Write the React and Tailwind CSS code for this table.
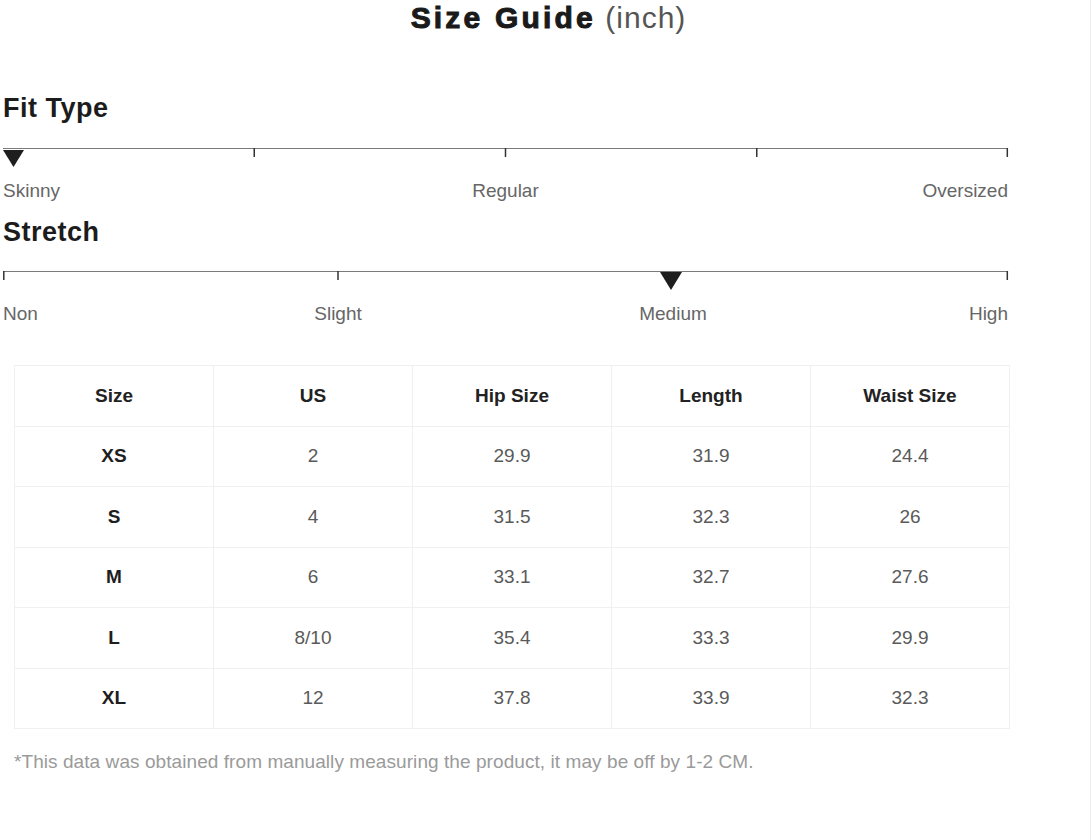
import React from "react";

function FitScale() {
  return (
    <svg width="1006" height="22" viewBox="0 0 1006 22" className="block">
      <line x1="0" y1="1.5" x2="1005" y2="1.5" stroke="#7a7a7a" strokeWidth="1.2" />
      {[251.25, 502.5, 753.75, 1004.3].map((x) => (
        <line key={x} x1={x} y1="1" x2={x} y2="10" stroke="#333" strokeWidth="1.5" />
      ))}
      <polygon points="0,3 21,3 10.5,20" fill="#1e1e1e" />
    </svg>
  );
}

function StretchScale() {
  return (
    <svg width="1006" height="22" viewBox="0 0 1006 22" className="block">
      <line x1="0" y1="1.5" x2="1005" y2="1.5" stroke="#7a7a7a" strokeWidth="1.2" />
      {[0.8, 335, 1004.3].map((x) => (
        <line key={x} x1={x} y1="1" x2={x} y2="10" stroke="#333" strokeWidth="1.5" />
      ))}
      <polygon points="657,2 679,2 668,20" fill="#1e1e1e" />
    </svg>
  );
}

const rows = [
  ["XS", "2", "29.9", "31.9", "24.4"],
  ["S", "4", "31.5", "32.3", "26"],
  ["M", "6", "33.1", "32.7", "27.6"],
  ["L", "8/10", "35.4", "33.3", "29.9"],
  ["XL", "12", "37.8", "33.9", "32.3"],
];

export default function App() {
  return (
    <div
      className="w-[1091px] h-[840px] bg-white border-r border-[#ececec] overflow-hidden"
      style={{ fontFamily: '"Liberation Sans", Arial, sans-serif' }}
    >
      <div className="h-[34px] pt-[1px] pl-[7px] text-center text-[30px] leading-[33px] whitespace-nowrap">
        <span className="font-bold tracking-[3.2px] text-[#1a1a1a] [-webkit-text-stroke:1px_#1a1a1a]">
          Size Guide
        </span>
        <span className="tracking-[1px] text-[#555]"> (inch)</span>
      </div>

      <div className="ml-[3px] mt-[58px] text-[27px] leading-[32px] font-bold tracking-[0.5px] text-[#1c1c1c]">
        Fit Type
      </div>
      <div className="ml-[3px] mt-[23px]">
        <FitScale />
      </div>
      <div className="ml-[3px] mt-[11px] w-[1005px] grid grid-cols-4 text-[19px] leading-[22px] text-[#666]">
        <div className="text-left">Skinny</div>
        <div className="col-span-2 text-center">Regular</div>
        <div className="text-right">Oversized</div>
      </div>

      <div className="ml-[3px] mt-[14px] text-[27px] leading-[32px] font-bold tracking-[0.5px] text-[#1c1c1c]">
        Stretch
      </div>
      <div className="ml-[3px] mt-[22px]">
        <StretchScale />
      </div>
      <div className="ml-[3px] mt-[11px] w-[1005px] grid grid-cols-6 text-[19px] leading-[22px] text-[#666]">
        <div className="text-left">Non</div>
        <div className="col-span-2 text-center">Slight</div>
        <div className="col-span-2 text-center">Medium</div>
        <div className="text-right">High</div>
      </div>

      <table className="ml-[14px] mt-[40px] w-[996px] table-fixed border-collapse text-[19px]">
        <thead>
          <tr className="h-[60.5px]">
            {["Size", "US", "Hip Size", "Length", "Waist Size"].map((h) => (
              <th
                key={h}
                className="border border-[#f0f0f0] font-bold text-[#222] text-center align-middle p-0"
              >
                {h}
              </th>
            ))}
          </tr>
        </thead>
        <tbody>
          {rows.map((r) => (
            <tr key={r[0]} className="h-[60.5px]">
              {r.map((c, i) => (
                <td
                  key={i}
                  className={
                    "border border-[#f0f0f0] text-center align-middle p-0 " +
                    (i === 0 ? "font-bold text-[#1e1e1e]" : "text-[#5a5a5a]")
                  }
                >
                  {c}
                </td>
              ))}
            </tr>
          ))}
        </tbody>
      </table>

      <div className="ml-[14px] mt-[22px] text-[19px] leading-[22px] tracking-[0.07px] text-[#9a9a9a] whitespace-nowrap">
        *This data was obtained from manually measuring the product, it may be off by 1-2 CM.
      </div>
    </div>
  );
}
